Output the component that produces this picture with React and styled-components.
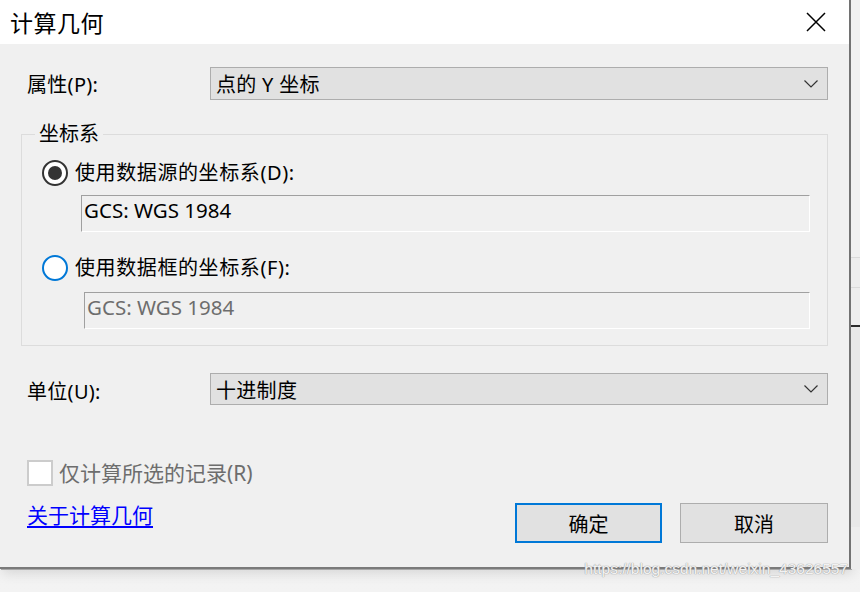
import React from "react";
import styled, { createGlobalStyle } from "styled-components";

const GlobalStyle = createGlobalStyle`
  html, body {
    margin: 0;
    padding: 0;
    background: #e4e4e4;
  }
  body {
    font-family: "Noto Sans", "Noto Sans CJK SC", sans-serif;
    color: #000;
  }
`;

const Screen = styled.div`
  position: relative;
  width: 860px;
  height: 592px;
  overflow: hidden;
  display: flex;
  flex-direction: column;
  background: linear-gradient(#e9e9e9, #f3f3f3);
`;

const TopRow = styled.div`
  display: flex;
  height: 569px;
`;

const SideStrip = styled.div`
  flex: 1;
  display: flex;
  flex-direction: column;
  background: #ededed;
`;

const StripPart = styled.div`
  height: ${(p) => p.$h}px;
  border-bottom: ${(p) => p.$line};
  background: ${(p) => p.$bg || "transparent"};
`;

const Dialog = styled.div`
  width: 849px;
  height: 567px;
  display: flex;
  flex-direction: column;
  background: #f0f0f0;
  border-right: 2px solid #727272;
  border-bottom: 2px solid #7a7a7a;
  box-shadow: 1px 1px 0 #a8a8a8, 2px 4px 12px rgba(0, 0, 0, 0.12);
`;

const TitleBar = styled.div`
  height: 44px;
  flex-shrink: 0;
  background: #ffffff;
  display: flex;
  align-items: center;
  justify-content: space-between;
  padding: 0 23px 0 10px;
`;

const Title = styled.div`
  font-family: "Noto Sans CJK SC", sans-serif;
  font-size: 23px;
  line-height: 28px;
  letter-spacing: 0.5px;
  margin-top: -1px;
`;

const Body = styled.div`
  flex: 1;
  display: flex;
  flex-direction: column;
  padding: 23px 21px 0 27px;
`;

const FieldRow = styled.div`
  display: flex;
  align-items: center;
  margin-top: ${(p) => p.$top || 0}px;
`;

const Label = styled.div`
  width: 183px;
  font-size: 20px;
  line-height: 24px;
  letter-spacing: 0.3px;
  margin-top: ${(p) => p.$shift || 0}px;
`;

const Select = styled.div`
  flex: 1;
  height: ${(p) => p.$h}px;
  box-sizing: border-box;
  border: 1px solid #adadad;
  background: #e1e1e1;
  display: flex;
  align-items: center;
  justify-content: space-between;
  padding: 0 9px 0 5px;
  font-size: 20px;
  letter-spacing: 0.3px;
`;

const Group = styled.fieldset`
  margin: 22px 0 0 -6px;
  padding: 0 0 16px 0;
  border: 1px solid #dcdcdc;
  min-width: 0;
`;

const Legend = styled.legend`
  margin-left: 13px;
  padding: 0 4px;
  font-size: 20px;
  line-height: 24px;
`;

const RadioRow = styled.div`
  display: flex;
  align-items: center;
  gap: 7px;
  padding-left: 20px;
  margin-top: ${(p) => p.$top}px;
  font-size: 20px;
  line-height: 26px;
  letter-spacing: 0.6px;
`;

const RadioCircle = styled.span`
  width: 26px;
  height: 26px;
  box-sizing: border-box;
  border-radius: 50%;
  border: ${(p) => (p.$checked ? "2.5px solid #333333" : "2px solid #0078d7")};
  background: #ffffff;
  display: flex;
  align-items: center;
  justify-content: center;
  flex-shrink: 0;
`;

const RadioDot = styled.span`
  width: 14px;
  height: 14px;
  border-radius: 50%;
  background: #333333;
`;

const TextBox = styled.div`
  height: 37px;
  box-sizing: border-box;
  margin: ${(p) => p.$top}px 17px 0 ${(p) => p.$left}px;
  border-top: 1px solid #a0a0a0;
  border-left: 1px solid #a0a0a0;
  border-right: 1px solid #ffffff;
  border-bottom: 1px solid #ffffff;
  padding: 0 0 0 2px;
  font-size: 20.5px;
  line-height: 28px;
  color: ${(p) => (p.$disabled ? "#6d6d6d" : "#000000")};
`;

const CheckRow = styled.div`
  display: flex;
  align-items: center;
  gap: 6px;
  margin-top: 55px;
  font-size: 21px;
  line-height: 26px;
  color: #6d6d6d;
`;

const CheckBox = styled.span`
  width: 26px;
  height: 26px;
  box-sizing: border-box;
  border: 2px solid #cccccc;
  background: #ffffff;
`;

const BottomRow = styled.div`
  display: flex;
  align-items: flex-start;
  margin-top: 17px;
`;

const HelpLink = styled.a`
  flex: 1;
  font-size: 21px;
  line-height: 24px;
  color: #0000ff;
  text-decoration: underline;
  text-underline-offset: 3px;
`;

const Button = styled.button`
  width: ${(p) => p.$w}px;
  height: 40px;
  margin-left: ${(p) => p.$gap || 0}px;
  box-sizing: border-box;
  background: #e1e1e1;
  border: ${(p) => (p.$primary ? "2px solid #0078d7" : "1px solid #adadad")};
  font-family: "Noto Sans CJK SC", sans-serif;
  font-size: 20px;
  color: #000;
  padding: 0;
`;

const Watermark = styled.div`
  position: absolute;
  right: 12px;
  top: 560px;
  font-family: "Liberation Sans", Arial, sans-serif;
  font-size: 15.5px;
  color: rgba(255, 255, 255, 0.9);
  text-shadow: 0 0 1px #9a9a9a, 0 0 1px #9a9a9a;
`;

const Chevron = () => (
  <svg width="14" height="8" viewBox="0 0 14 8">
    <path d="M0.5 0.5 L7 7 L13.5 0.5" fill="none" stroke="#333" strokeWidth="1.2" />
  </svg>
);

const CloseIcon = () => (
  <svg width="20" height="20" viewBox="0 0 20 20">
    <path d="M1 1 L19 19 M19 1 L1 19" stroke="#000" strokeWidth="1.5" />
  </svg>
);

export default function App() {
  return (
    <>
      <GlobalStyle />
      <Screen>
        <TopRow>
          <Dialog>
            <TitleBar>
              <Title>计算几何</Title>
              <CloseIcon />
            </TitleBar>
            <Body>
              <FieldRow>
                <Label $shift={3}>属性(P):</Label>
                <Select $h={33}>
                  <span>点的 Y 坐标</span>
                  <Chevron />
                </Select>
              </FieldRow>

              <Group>
                <Legend>坐标系</Legend>
                <RadioRow $top={14}>
                  <RadioCircle $checked>
                    <RadioDot />
                  </RadioCircle>
                  使用数据源的坐标系(D):
                </RadioRow>
                <TextBox $top={9} $left={59}>GCS: WGS 1984</TextBox>
                <RadioRow $top={23}>
                  <RadioCircle />
                  使用数据框的坐标系(F):
                </RadioRow>
                <TextBox $top={11} $left={62} $disabled>
                  GCS: WGS 1984
                </TextBox>
              </Group>

              <FieldRow $top={27}>
                <Label $shift={6}>单位(U):</Label>
                <Select $h={32}>
                  <span>十进制度</span>
                  <Chevron />
                </Select>
              </FieldRow>

              <CheckRow>
                <CheckBox />
                仅计算所选的记录(R)
              </CheckRow>

              <BottomRow>
                <HelpLink href="#">关于计算几何</HelpLink>
                <Button $w={147} $primary>
                  确定
                </Button>
                <Button $w={148} $gap={18}>
                  取消
                </Button>
              </BottomRow>
            </Body>
          </Dialog>
          <SideStrip>
            <StripPart $h={257} $line="1px solid #dadada" $bg="#f0f0f0" />
            <StripPart $h={29} $line="1px solid #dadada" />
            <StripPart $h={37} $line="2px solid #2a2a2a" />
            <StripPart $h={200} $line="none" $bg="#e8e8e8" />
          </SideStrip>
        </TopRow>
        <Watermark>https://blog.csdn.net/weixin_43626557</Watermark>
      </Screen>
    </>
  );
}
